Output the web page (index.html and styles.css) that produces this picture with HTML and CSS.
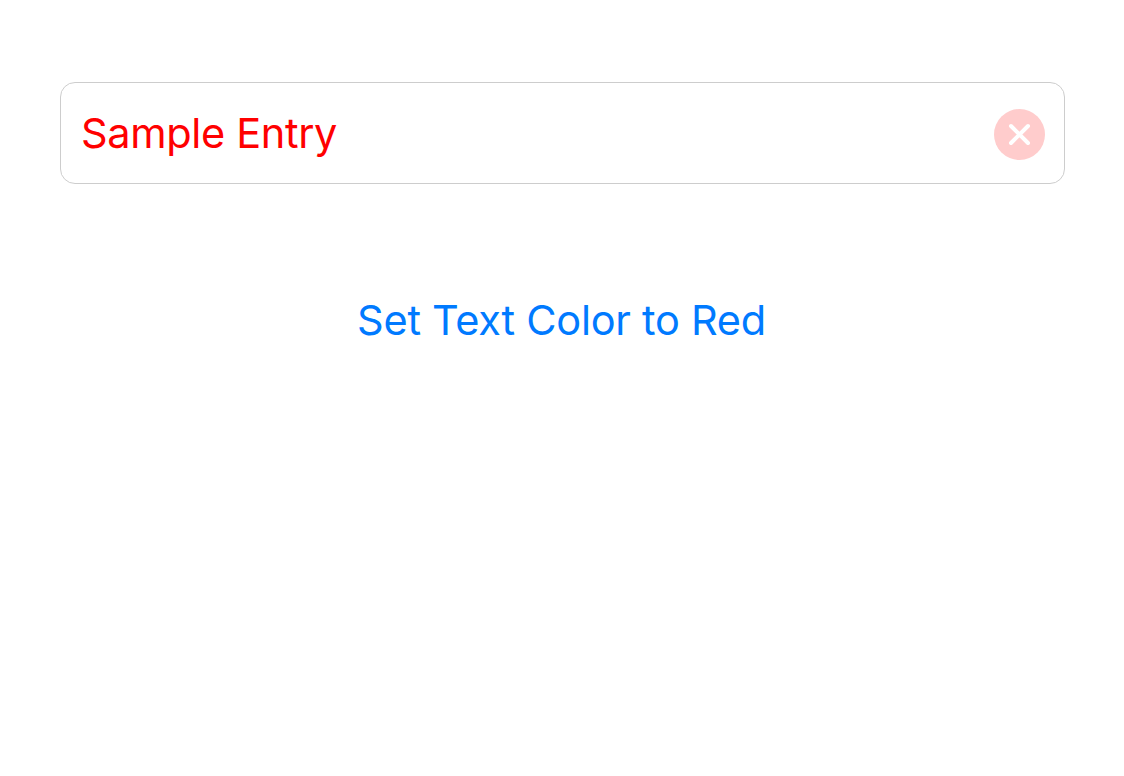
FILE: index.html
```html
<!DOCTYPE html>
<html lang="en">
<head>
<meta charset="utf-8">
<title>Text Color</title>
<link rel="stylesheet" href="styles.css">
</head>
<body>
<main class="screen">
  <div class="field">
    <span class="field-text">Sample Entry</span>
    <button class="clear" aria-label="Clear text">
      <svg class="clear-icon" viewBox="0 0 51 51">
        <circle cx="25.5" cy="25.5" r="25.5" fill="#ffcccc"/>
        <path d="M17 17 34 34M34 17 17 34" stroke="#fff" stroke-width="4" stroke-linecap="round"/>
      </svg>
    </button>
  </div>
  <button class="action">Set Text Color to Red</button>
</main>
</body>
</html>
```

FILE: styles.css
```css
* { box-sizing: border-box; }
body { margin: 0; background: #fff; font-family: Inter, "Liberation Sans", sans-serif; }
.screen { height: 776px; padding: 82px 59px 0 60px; display: flex; flex-direction: column; align-items: center; }
.field { width: 1005px; height: 102px; padding: 0 19px 0 20px; border: 1px solid #cdcdcd; border-radius: 15px; display: flex; align-items: center; justify-content: space-between; }
.field-text { color: #f00; font-size: 41.5px; line-height: 50px; letter-spacing: -0.35px; white-space: nowrap; }
.clear, .action { border: 0; padding: 0; background: none; font: inherit; }
.clear { width: 51px; height: 51px; margin-top: 3px; }
.clear-icon { display: block; width: 51px; height: 51px; }
.action { margin: 111px 2px 0 0; color: #007aff; font-size: 41.5px; line-height: 50px; letter-spacing: -0.27px; white-space: nowrap; }
```
